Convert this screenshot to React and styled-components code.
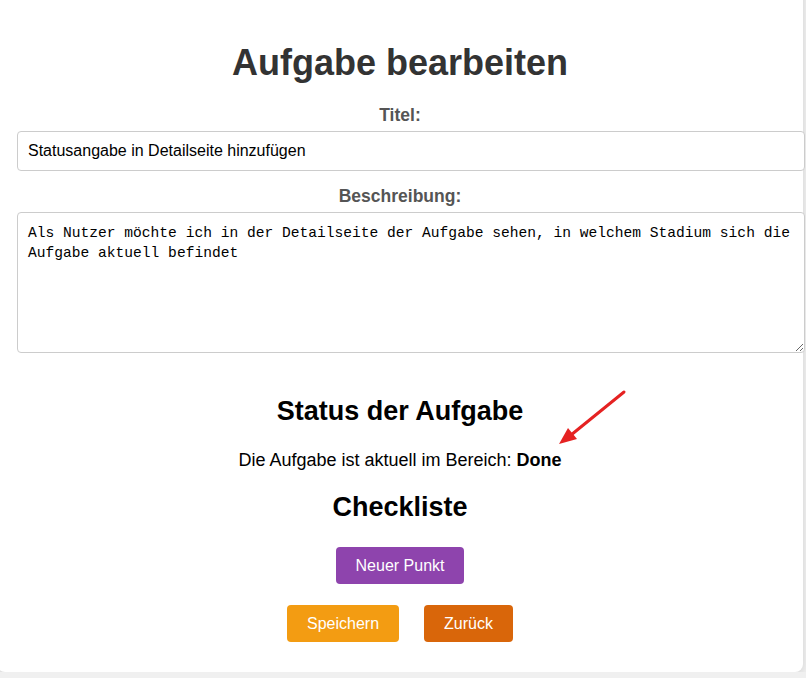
import React from 'react';
import styled, { createGlobalStyle } from 'styled-components';

const GlobalStyle = createGlobalStyle`
  body {
    margin: 0;
    background: #f0f0f0;
    font-family: "Liberation Sans", Arial, sans-serif;
    overflow: hidden;
  }
`;

const Card = styled.div`
  position: relative;
  box-sizing: border-box;
  width: 806px;
  margin: -20px 0 0 -3px;
  padding: 62px 20px 30px;
  background: #fff;
  border-radius: 8px;
  box-shadow: 0 2px 8px rgba(0, 0, 0, 0.12);
  text-align: center;
`;

const Title = styled.h1`
  margin: 0 0 21px;
  font-size: 36px;
  line-height: 42px;
  color: #333;
`;

const Label = styled.label`
  display: block;
  margin: ${({ $first }) => ($first ? '0' : '15px')} 0 6px;
  font-size: 17.5px;
  line-height: 20px;
  font-weight: bold;
  color: #555;
`;

const TextInput = styled.input`
  display: block;
  width: 100%;
  padding: 10px;
  border: 1px solid #ccc;
  border-radius: 4px;
  font-family: "Liberation Sans", Arial, sans-serif;
  font-size: 16px;
  line-height: 18px;
  color: #000;
  outline: none;
`;

const TextArea = styled.textarea`
  display: block;
  box-sizing: border-box;
  width: calc(100% + 22px);
  height: 141px;
  padding: 10px;
  border: 1px solid #ccc;
  border-radius: 4px;
  font-family: "Liberation Mono", "DejaVu Sans Mono", monospace;
  font-size: 14.6px;
  line-height: 20px;
  color: #000;
  outline: none;
`;

const Heading = styled.h2`
  margin: ${({ $top }) => $top} 0 0;
  font-size: 27px;
  line-height: 31px;
  color: #000;
`;

const StatusText = styled.p`
  margin: 23px 0 0;
  font-size: 18px;
  line-height: 21px;
  color: #000;
`;

const ButtonRow = styled.div`
  display: flex;
  justify-content: center;
  gap: 25px;
  margin-top: ${({ $top }) => $top};
`;

const Button = styled.button`
  padding: 0 20px;
  height: 37px;
  border: none;
  border-radius: 4px;
  background: ${({ $color }) => $color};
  color: #fff;
  font-family: "Liberation Sans", Arial, sans-serif;
  font-size: 16px;
  cursor: pointer;
`;

const Arrow = styled.svg`
  position: absolute;
  left: 558px;
  top: 408px;
  overflow: visible;
`;

export default function App() {
  return (
    <>
      <GlobalStyle />
      <Card>
        <Title>Aufgabe bearbeiten</Title>
        <Label $first>Titel:</Label>
        <TextInput defaultValue="Statusangabe in Detailseite hinzufügen" />
        <Label>Beschreibung:</Label>
        <TextArea defaultValue="Als Nutzer möchte ich in der Detailseite der Aufgabe sehen, in welchem Stadium sich die Aufgabe aktuell befindet" />
        <Heading $top="43px">Status der Aufgabe</Heading>
        <StatusText>
          Die Aufgabe ist aktuell im Bereich: <b>Done</b>
        </StatusText>
        <Heading $top="21px">Checkliste</Heading>
        <ButtonRow $top="24px">
          <Button $color="#8e44ad">Neuer Punkt</Button>
        </ButtonRow>
        <ButtonRow $top="21px">
          <Button $color="#f39c12">Speichern</Button>
          <Button $color="#d9660a">Zurück</Button>
        </ButtonRow>
        <Arrow width="75" height="60" viewBox="0 0 75 60">
          <line x1="69" y1="4" x2="16" y2="47" stroke="#e52222" strokeWidth="3" strokeLinecap="round" />
          <polygon points="4,56 22,51 13,40" fill="#e52222" />
        </Arrow>
      </Card>
    </>
  );
}
